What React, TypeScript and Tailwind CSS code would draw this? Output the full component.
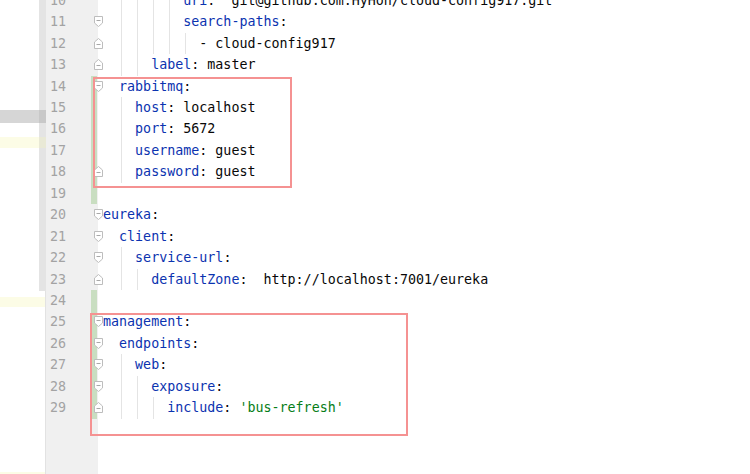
import React from "react";

type Seg = { t: string; c?: "k" | "v" | "s" | "p" };
type Line = {
  n: number;
  level: number;
  guides: number; // number of guides starting from unit 1
  segs: Seg[];
  fold?: "start" | "end";
  green?: boolean;
};

const K = (t: string): Seg => ({ t, c: "k" });
const V = (t: string): Seg => ({ t, c: "v" });
const S = (t: string): Seg => ({ t, c: "s" });

const lines: Line[] = [
  { n: 10, level: 5, guides: 4, segs: [K("uri"), V(":  git@github.com:HyHon/cloud-config917.git")] },
  { n: 11, level: 5, guides: 4, segs: [K("search-paths"), V(":")], fold: "start" },
  { n: 12, level: 6, guides: 5, segs: [V("- cloud-config917")], fold: "end" },
  { n: 13, level: 3, guides: 2, segs: [K("label"), V(": master")], fold: "end" },
  { n: 14, level: 1, guides: 0, segs: [K("rabbitmq"), V(":")], fold: "start", green: true },
  { n: 15, level: 2, guides: 1, segs: [K("host"), V(": localhost")], green: true },
  { n: 16, level: 2, guides: 1, segs: [K("port"), V(": 5672")], green: true },
  { n: 17, level: 2, guides: 1, segs: [K("username"), V(": guest")], green: true },
  { n: 18, level: 2, guides: 1, segs: [K("password"), V(": guest")], fold: "end", green: true },
  { n: 19, level: 0, guides: 0, segs: [], green: true },
  { n: 20, level: 0, guides: 0, segs: [K("eureka"), V(":")], fold: "start" },
  { n: 21, level: 1, guides: 0, segs: [K("client"), V(":")], fold: "start" },
  { n: 22, level: 2, guides: 1, segs: [K("service-url"), V(":")], fold: "start" },
  { n: 23, level: 3, guides: 2, segs: [K("defaultZone"), V(":  http://localhost:7001/eureka")], fold: "end" },
  { n: 24, level: 0, guides: 0, segs: [], green: true },
  { n: 25, level: 0, guides: 0, segs: [K("management"), V(":")], fold: "start", green: true },
  { n: 26, level: 1, guides: 0, segs: [K("endpoints"), V(":")], fold: "start", green: true },
  { n: 27, level: 2, guides: 1, segs: [K("web"), V(":")], fold: "start", green: true },
  { n: 28, level: 3, guides: 2, segs: [K("exposure"), V(":")], fold: "start", green: true },
  { n: 29, level: 4, guides: 3, segs: [K("include"), V(": "), S("'bus-refresh'")], fold: "end", green: true },
];

function FoldMarker({ kind }: { kind: "start" | "end" }) {
  return (
    <svg
      className="absolute left-[48px] top-[5px]"
      width="9"
      height="11"
      viewBox="0 0 9 11"
    >
      {kind === "start" ? (
        <>
          <path d="M0.5 0.5 H8.5 V7 L4.5 10.5 L0.5 7 Z" fill="#ffffff" stroke="#bdbdbd" strokeWidth="1" />
          <path d="M2.5 4.5 H6.5" stroke="#a8a8a8" strokeWidth="1" />
        </>
      ) : (
        <>
          <path d="M0.5 10.5 H8.5 V4 L4.5 0.5 L0.5 4 Z" fill="#ffffff" stroke="#bdbdbd" strokeWidth="1" />
          <path d="M2.5 6.5 H6.5" stroke="#a8a8a8" strokeWidth="1" />
        </>
      )}
    </svg>
  );
}

function Row({ line }: { line: Line }) {
  const units = Array.from({ length: line.level }, (_, i) => i);
  return (
    <div className="relative flex h-[21.44px] shrink-0">
      <div className="flex w-[52px] shrink-0 bg-[#f0f0f0]">
        <span className="w-[20px] text-right text-[#a3a3a3]">{line.n}</span>
        {line.green ? <span className="ml-[25px] h-full w-[6px] bg-[#c9dec1]" /> : null}
      </div>
      <div className="flex h-full pl-[5px]">
        {units.map((u) => (
          <span key={u} className="flex h-full w-[2ch] shrink-0">
            {u >= 1 && u <= line.guides ? <span className="ml-[2px] h-full w-px bg-[#e4e4e4]" /> : null}
          </span>
        ))}
        <span className="whitespace-pre">
          {line.segs.map((s, i) => (
            <span
              key={i}
              className={
                s.c === "k" ? "text-[#0b33b0]" : s.c === "s" ? "text-[#067d17]" : "text-[#080808]"
              }
            >
              {s.t}
            </span>
          ))}
        </span>
      </div>
      {line.fold ? <FoldMarker kind={line.fold} /> : null}
    </div>
  );
}

export default function App() {
  return (
    <div
      className="relative flex h-[474px] w-[750px] overflow-hidden bg-white text-[13.33px] leading-[21.44px]"
      style={{ fontFamily: '"DejaVu Sans Mono", "Liberation Mono", monospace' }}
    >
      {/* left side panel */}
      <div className="flex w-[46px] shrink-0 flex-col">
        <div className="flex h-[110px]">
          <div className="w-[39px] bg-white" />
          <div className="w-[7px] bg-[#e4e4e4]" />
        </div>
        <div className="flex h-[13px]">
          <div className="w-[39px] bg-[#d6d6d6]" />
          <div className="w-[7px] bg-[#c8c8c8]" />
        </div>
        <div className="flex h-[14px]">
          <div className="w-[39px] bg-white" />
          <div className="w-[7px] bg-[#e4e4e4]" />
        </div>
        <div className="flex h-[11px]">
          <div className="w-[39px] bg-[#fcfce6]" />
          <div className="w-[7px] bg-[#e9e9d6]" />
        </div>
        <div className="flex h-[143px]">
          <div className="w-[39px] bg-white" />
          <div className="w-[7px] bg-[#e4e4e4]" />
        </div>
        <div className="flex h-[6px]">
          <div className="w-[45px] bg-white" />
          <div className="w-px bg-[#e2e2e2]" />
        </div>
        <div className="flex h-[10px]">
          <div className="w-[45px] bg-[#fcfce6]" />
          <div className="w-px bg-[#e2e2e2]" />
        </div>
        <div className="flex flex-1">
          <div className="w-[45px] bg-white" />
          <div className="w-px bg-[#e2e2e2]" />
        </div>
        <div className="flex h-[2px]">
          <div className="w-[45px] bg-[#fcfce6]" />
          <div className="w-px bg-[#e2e2e2]" />
        </div>
      </div>

      {/* editor */}
      <div className="flex flex-1 flex-col">
        <div className="mt-[-10.16px] flex flex-col">
          {lines.map((l) => (
            <Row key={l.n} line={l} />
          ))}
        </div>
        <div className="flex flex-1">
          <div className="w-[52px] bg-[#f0f0f0]" />
        </div>
      </div>

      {/* highlight boxes */}
      <div className="absolute left-[93px] top-[77px] h-[111px] w-[199px] border-2 border-[#f59292]" />
      <div className="absolute left-[90px] top-[313px] h-[123px] w-[318px] border-2 border-[#f59292]" />
    </div>
  );
}
